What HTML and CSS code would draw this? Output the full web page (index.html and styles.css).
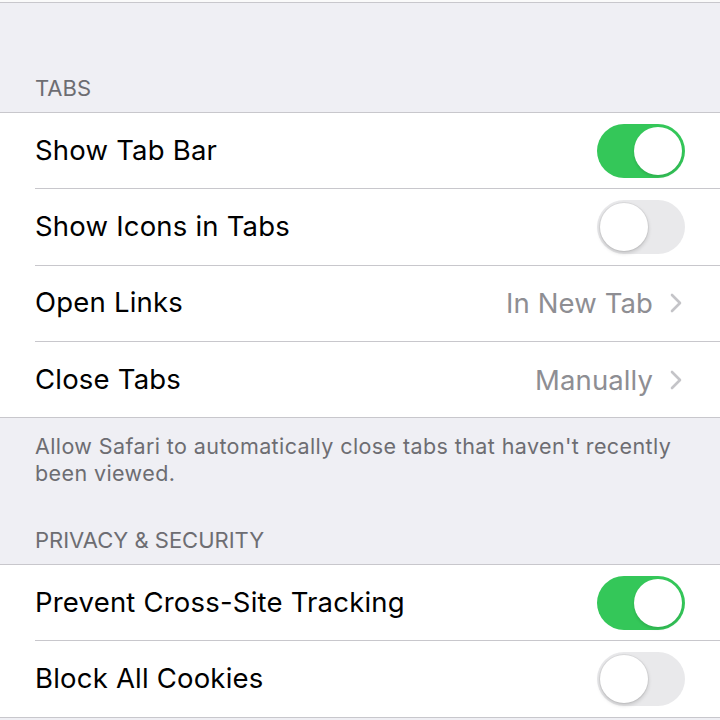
FILE: index.html
```html
<!DOCTYPE html>
<html>
<head>
<meta charset="utf-8">
<link rel="stylesheet" href="styles.css">
</head>
<body>
<div class="top"></div>
<div class="group-header tall">TABS</div>
<div class="group">
  <div class="row">
    <span class="label">Show Tab Bar</span>
    <span class="switch on"><span class="knob"></span></span>
  </div>
  <div class="row">
    <span class="label">Show Icons in Tabs</span>
    <span class="switch"><span class="knob"></span></span>
  </div>
  <div class="row">
    <span class="label">Open Links</span>
    <span class="detail">In New Tab<svg class="chev" width="12" height="20" viewBox="0 0 12 20"><path d="M2 2 L10 10 L2 18" fill="none" stroke="#c4c4c8" stroke-width="2.6" stroke-linecap="round" stroke-linejoin="round"/></svg></span>
  </div>
  <div class="row last">
    <span class="label">Close Tabs</span>
    <span class="detail">Manually<svg class="chev" width="12" height="20" viewBox="0 0 12 20"><path d="M2 2 L10 10 L2 18" fill="none" stroke="#c4c4c8" stroke-width="2.6" stroke-linecap="round" stroke-linejoin="round"/></svg></span>
  </div>
</div>
<div class="group-footer">Allow Safari to automatically close tabs that haven't recently been viewed.</div>
<div class="group-header">PRIVACY &amp; SECURITY</div>
<div class="group">
  <div class="row">
    <span class="label">Prevent Cross-Site Tracking</span>
    <span class="switch on"><span class="knob"></span></span>
  </div>
  <div class="row last">
    <span class="label">Block All Cookies</span>
    <span class="switch"><span class="knob"></span></span>
  </div>
</div>
</body>
</html>
```
FILE: styles.css
```css
html, body {
  margin: 0;
  padding: 0;
}
body {
  background: #efeff4;
  font-family: Inter, "Liberation Sans", sans-serif;
  width: 720px;
  height: 720px;
  overflow: hidden;
}
.top {
  height: 2px;
  background: #fafafa;
  border-bottom: 1px solid #c8c7cc;
}
.group-header {
  font-size: 22px;
  line-height: 24px;
  color: #6d6d72;
  padding: 0 35px 12px;
  height: 24px;
  padding-top: 55px;
}
.group-header.tall {
  padding-top: 73px;
}
.group {
  background: #fff;
  border-top: 1px solid #c8c7cc;
  border-bottom: 1px solid #c8c7cc;
}
.row {
  margin-left: 35px;
  padding-right: 35px;
  height: 75.3px;
  display: flex;
  align-items: center;
  justify-content: space-between;
  border-bottom: 1px solid #c8c7cc;
}
.row.last {
  border-bottom: none;
}
.label {
  font-size: 27.5px;
  color: #000;
  letter-spacing: 0.2px;
  position: relative;
  top: -1px;
}
.detail {
  font-size: 27.5px;
  color: #8e8e93;
  display: flex;
  align-items: center;
  letter-spacing: 0.1px;
}
.chev {
  margin-left: 17px;
  margin-right: 3px;
}
.switch {
  width: 88px;
  height: 54px;
  border-radius: 27px;
  background: #e9e9eb;
  box-sizing: border-box;
  position: relative;
  display: block;
}
.switch.on {
  background: #34c759;
}
.knob {
  position: absolute;
  top: 3px;
  left: 3px;
  width: 48px;
  height: 48px;
  border-radius: 50%;
  background: #fff;
  box-shadow: 0 2px 4px rgba(0,0,0,0.18), 0 0 0 1px rgba(0,0,0,0.05);
}
.switch.on .knob {
  left: 37px;
  box-shadow: 0 2px 3px rgba(0,0,0,0.12);
}
.group-footer {
  font-size: 21.5px;
  line-height: 27px;
  color: #6d6d72;
  padding: 15px 35px 0;
  letter-spacing: 0.4px;
}
.group-footer + .group-header {
  padding-top: 41px;
}
```
